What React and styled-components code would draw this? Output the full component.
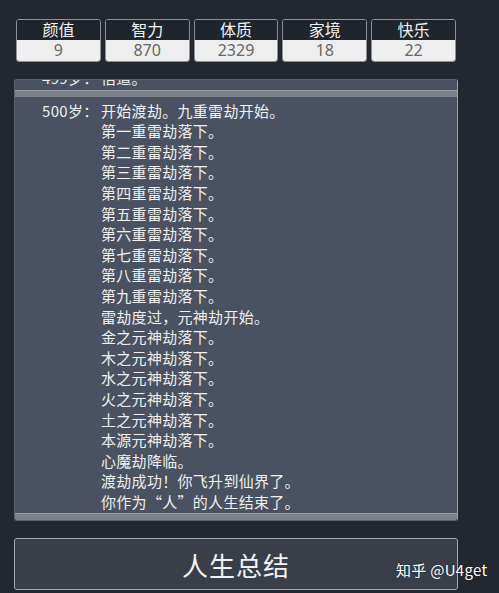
import { useEffect, useRef } from 'react'
import styled, { createGlobalStyle } from 'styled-components'

const GlobalStyle = createGlobalStyle`
  html, body {
    margin: 0;
    background: #222730;
  }
  body {
    font-family: "Noto Sans CJK SC", "Noto Sans", sans-serif;
  }
`

const Page = styled.div`
  position: relative;
  width: 499px;
  height: 593px;
  box-sizing: border-box;
  padding: 19px 41px 0 14px;
  display: flex;
  flex-direction: column;
  overflow: hidden;
`

const StatRow = styled.div`
  display: grid;
  grid-template-columns: repeat(5, 1fr);
  gap: 4px;
  padding: 0 2px;
`

const StatBox = styled.div`
  display: flex;
  flex-direction: column;
  border: 1px solid #8d929a;
  border-radius: 3px;
  overflow: hidden;
  font-family: "Noto Sans", "Noto Sans CJK SC", sans-serif;
`

const StatLabel = styled.div`
  height: 20px;
  line-height: 20px;
  background: #20242c;
  color: #f2f2f2;
  font-size: 16px;
  text-align: center;
  overflow: hidden;
`

const StatValue = styled.div`
  height: 21px;
  line-height: 21px;
  background: #eeeeee;
  color: #666;
  font-size: 16px;
  text-align: center;
  overflow: hidden;
`

const LogPanel = styled.div`
  margin-top: 17px;
  height: 442px;
  box-sizing: border-box;
  background: #4a5261;
  border: 1px solid #5d636d;
  border-right-color: #9ca1a8;
  border-radius: 3px;
  overflow-y: auto;
  scrollbar-width: none;
  &::-webkit-scrollbar { display: none; }
`

const Entry = styled.div`
  display: grid;
  grid-template-columns: 59px 1fr;
  padding: 4px 0 2px 27px;
  border-bottom: 6px solid #7d828a;
  box-shadow: inset 0 -1px 0 #9a9ea5;
  color: #f0f0f0;
  font-size: 15px;
  line-height: 20.6px;
  letter-spacing: 0.3px;
`

const Age = styled.div`
  white-space: nowrap;
`

const Lines = styled.div`
  display: flex;
  flex-direction: column;
`

const SummaryButton = styled.button`
  margin-top: 17px;
  height: 52px;
  box-sizing: border-box;
  background: #393e48;
  border: 1px solid #a3a8b0;
  border-radius: 3px;
  color: #f2f2f2;
  font-family: inherit;
  font-size: 26px;
  letter-spacing: 1px;
  cursor: pointer;
`

const Watermark = styled.div`
  position: absolute;
  left: 396px;
  top: 559px;
  color: #ffffff;
  font-size: 15px;
  letter-spacing: 0.3px;
  white-space: nowrap;
  text-shadow: 0 0 2px rgba(0, 0, 0, 0.4);
`

const stats = [
  { label: '颜值', value: 9 },
  { label: '智力', value: 870 },
  { label: '体质', value: 2329 },
  { label: '家境', value: 18 },
  { label: '快乐', value: 22 },
]

const entries = [
  { age: 499, lines: ['悟道。'] },
  {
    age: 500,
    lines: [
      '开始渡劫。九重雷劫开始。',
      '第一重雷劫落下。',
      '第二重雷劫落下。',
      '第三重雷劫落下。',
      '第四重雷劫落下。',
      '第五重雷劫落下。',
      '第六重雷劫落下。',
      '第七重雷劫落下。',
      '第八重雷劫落下。',
      '第九重雷劫落下。',
      '雷劫度过，元神劫开始。',
      '金之元神劫落下。',
      '木之元神劫落下。',
      '水之元神劫落下。',
      '火之元神劫落下。',
      '土之元神劫落下。',
      '本源元神劫落下。',
      '心魔劫降临。',
      '渡劫成功！你飞升到仙界了。',
      '你作为“人”的人生结束了。',
    ],
  },
]

export default function App() {
  const logRef = useRef(null)

  useEffect(() => {
    if (logRef.current) logRef.current.scrollTop = logRef.current.scrollHeight
  }, [])

  return (
    <>
      <GlobalStyle />
      <Page>
        <StatRow>
          {stats.map(s => (
            <StatBox key={s.label}>
              <StatLabel>{s.label}</StatLabel>
              <StatValue>{s.value}</StatValue>
            </StatBox>
          ))}
        </StatRow>

        <LogPanel ref={logRef}>
          {entries.map(e => (
            <Entry key={e.age}>
              <Age>{e.age}岁：</Age>
              <Lines>
                {e.lines.map((line, i) => <span key={i}>{line}</span>)}
              </Lines>
            </Entry>
          ))}
        </LogPanel>

        <SummaryButton type="button">人生总结</SummaryButton>
        <Watermark>知乎 @U4get</Watermark>
      </Page>
    </>
  )
}
